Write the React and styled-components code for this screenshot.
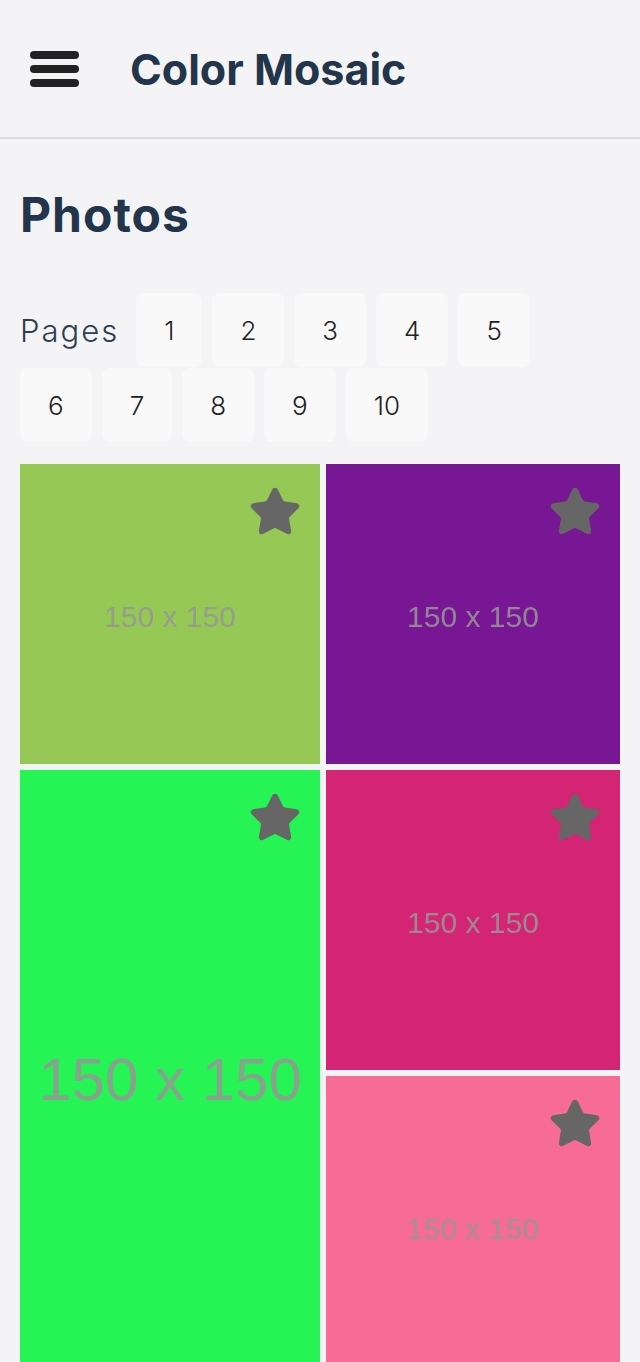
import React from 'react';
import styled, { createGlobalStyle } from 'styled-components';

const photos = [
  { id: 1, color: '#95c855' },
  { id: 2, color: '#771794' },
  { id: 3, color: '#26f455', tall: true },
  { id: 4, color: '#d32573' },
  { id: 5, color: '#f76c97' },
];

const pages = [1, 2, 3, 4, 5, 6, 7, 8, 9, 10];

const StarIcon = () => (
  <svg width="54" height="54" viewBox="0 0 24 24" fill="#666" stroke="#666" strokeWidth="1.6" strokeLinejoin="round">
    <path d="M11.525 2.295a.53.53 0 0 1 .95 0l2.31 4.679a2.123 2.123 0 0 0 1.595 1.16l5.166.756a.53.53 0 0 1 .294.904l-3.736 3.638a2.123 2.123 0 0 0-.611 1.878l.882 5.14a.53.53 0 0 1-.771.56l-4.618-2.428a2.122 2.122 0 0 0-1.973 0L6.396 21.01a.53.53 0 0 1-.77-.56l.881-5.139a2.122 2.122 0 0 0-.611-1.879L2.16 9.795a.53.53 0 0 1 .294-.906l5.165-.755a2.122 2.122 0 0 0 1.597-1.16z" />
  </svg>
);

const App = () => {
  return (
    <>
      <GlobalStyle />
      <Header>
        <Burger aria-label="menu">
          <Bar />
          <Bar />
          <Bar />
        </Burger>
        <Title>Color Mosaic</Title>
      </Header>
      <Main>
        <Heading>Photos</Heading>
        <Pager>
          <PagerLabel>Pages</PagerLabel>
          {pages.map((p) => (
            <PageButton key={p}>{p}</PageButton>
          ))}
        </Pager>
        <Grid>
          {photos.map((photo) => (
            <Tile key={photo.id} $color={photo.color} $tall={photo.tall}>
              <Placeholder $tall={photo.tall}>150 x 150</Placeholder>
              <Fav>
                <StarIcon />
              </Fav>
            </Tile>
          ))}
        </Grid>
      </Main>
    </>
  );
};

export default App;

const GlobalStyle = createGlobalStyle`
  body {
    margin: 0;
    background: #f4f4f6;
    font-family: Inter, "Noto Sans", sans-serif;
  }
`;

const Header = styled.header`
  height: 137px;
  display: flex;
  align-items: center;
  gap: 51px;
  padding-left: 30px;
  border-bottom: 2px solid #dcdcdf;
`;

const Burger = styled.div`
  display: flex;
  flex-direction: column;
  gap: 6px;
`;

const Bar = styled.span`
  display: block;
  width: 49px;
  height: 8px;
  border-radius: 4px;
  background: #222;
`;

const Title = styled.h1`
  margin: 0;
  font-size: 43px;
  font-weight: 700;
  color: #22354a;
  letter-spacing: 0;
`;

const Main = styled.main`
  padding: 0 20px;
`;

const Heading = styled.h2`
  margin: 47px 0 49px;
  font-size: 48px;
  font-weight: 700;
  color: #22354a;
  line-height: 58px;
  letter-spacing: 1px;
`;

const Pager = styled.div`
  display: flex;
  flex-wrap: wrap;
  align-items: center;
  row-gap: 1px;
`;

const PagerLabel = styled.span`
  font-size: 31px;
  font-weight: 300;
  color: #2c3e50;
  letter-spacing: 2px;
  margin-right: 17px;
`;

const PageButton = styled.button`
  height: 74px;
  padding: 0 28px;
  margin-right: 10px;
  border: none;
  border-radius: 8px;
  background: #f9f9fa;
  font-family: inherit;
  font-size: 26px;
  font-weight: 300;
  color: #222;
`;

const Grid = styled.div`
  display: grid;
  grid-template-columns: 300px 294px;
  grid-auto-rows: 300px;
  gap: 6px;
  margin-top: 22px;
`;

const Tile = styled.div`
  position: relative;
  background: ${(p) => p.$color};
  grid-row: ${(p) => (p.$tall ? 'span 2' : 'auto')};
  display: flex;
  align-items: center;
  justify-content: center;
  overflow: hidden;
`;

const Placeholder = styled.span`
  font-family: "Liberation Sans", Arial, sans-serif;
  font-size: ${(p) => (p.$tall ? '60px' : '30px')};
  color: rgba(150, 150, 150, 0.88);
  filter: blur(0.6px);
  margin-top: ${(p) => (p.$tall ? '12px' : '6px')};
`;

const Fav = styled.div`
  position: absolute;
  top: 21px;
  right: 18px;
  line-height: 0;
`;
